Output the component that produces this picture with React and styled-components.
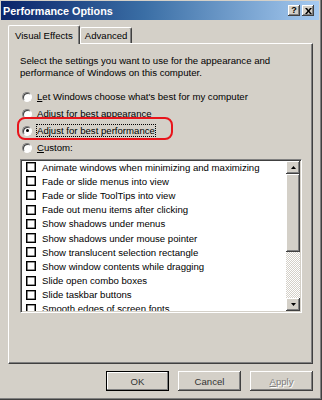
import React from "react";
import styled, { createGlobalStyle } from "styled-components";

const GlobalStyle = createGlobalStyle`
  html, body {
    margin: 0;
    padding: 0;
    background: #d4d0c8;
  }
  body {
    font-family: "Liberation Sans", Arial, sans-serif;
    font-size: 9.6px;
    color: #000;
  }
`;

const effects = [
  "Animate windows when minimizing and maximizing",
  "Fade or slide menus into view",
  "Fade or slide ToolTips into view",
  "Fade out menu items after clicking",
  "Show shadows under menus",
  "Show shadows under mouse pointer",
  "Show translucent selection rectangle",
  "Show window contents while dragging",
  "Slide open combo boxes",
  "Slide taskbar buttons",
  "Smooth edges of screen fonts"
];

export default function App() {
  return (
    <>
      <GlobalStyle />
      <Window>
        <TitleBar>
          <Title>Performance Options</Title>
          <TitleButtons>
            <CaptionButton>?</CaptionButton>
            <CaptionButton>
              <svg width="7" height="6" viewBox="0 0 7 6">
                <path d="M0 0h2l1.5 2 1.5-2h2L4.5 3 7 6H5L3.5 4 2 6H0l2.5-3z" fill="#000" />
              </svg>
            </CaptionButton>
          </TitleButtons>
        </TitleBar>

        <TabStrip>
          <Tab $active>Visual Effects</Tab>
          <Tab>Advanced</Tab>
        </TabStrip>

        <Panel>
          <Intro>
            Select the settings you want to use for the appearance and
            <br />
            performance of Windows on this computer.
          </Intro>

          <RadioGroup>
            <RadioRow>
              <Radio />
              <span>
                <u>L</u>et Windows choose what's best for my computer
              </span>
            </RadioRow>
            <RadioRow>
              <Radio />
              <span>Adjust for best appearance</span>
            </RadioRow>
            <RadioRow>
              <Radio $checked />
              <Focused>Adjust for best performance</Focused>
            </RadioRow>
            <RadioRow>
              <Radio />
              <span>
                <u>C</u>ustom:
              </span>
            </RadioRow>
            <Highlight />
          </RadioGroup>

          <ListBox>
            <Items>
              {effects.map((label) => (
                <Item key={label}>
                  <Check />
                  {label}
                </Item>
              ))}
            </Items>
            <ScrollBar>
              <Arrow>
                <svg width="5" height="3" viewBox="0 0 5 3">
                  <path d="M2.5 0L5 3H0z" fill="#000" />
                </svg>
              </Arrow>
              <Thumb />
              <Track />
              <Arrow>
                <svg width="5" height="3" viewBox="0 0 5 3">
                  <path d="M0 0h5L2.5 3z" fill="#000" />
                </svg>
              </Arrow>
            </ScrollBar>
          </ListBox>
        </Panel>

        <ButtonRow>
          <Button $default>OK</Button>
          <Button>Cancel</Button>
          <Button $disabled>
            <u>A</u>pply
          </Button>
        </ButtonRow>
      </Window>
    </>
  );
}

// Styled Components

const bevelOut = `
  box-shadow: inset -1px -1px #404040, inset 1px 1px #fff,
    inset -2px -2px #808080, inset 2px 2px #d4d0c8;
`;

const Window = styled.div`
  width: 322px;
  height: 400px;
  box-sizing: border-box;
  padding: 1px 3px 3px 1px;
  background: #d4d0c8;
  box-shadow: inset -1px -1px #404040, inset -2px -2px #808080;
  display: flex;
  flex-direction: column;
`;

const TitleBar = styled.div`
  height: 19px;
  display: flex;
  align-items: center;
  justify-content: space-between;
  padding: 0 5px 0 2px;
  background: linear-gradient(to right, #0a246a 0%, #3a6ea5 45%, #a6caf0 100%);
`;

const Title = styled.span`
  color: #fff;
  font-weight: bold;
  font-size: 10.8px;
`;

const TitleButtons = styled.div`
  display: flex;
  gap: 2px;
`;

const CaptionButton = styled.div`
  width: 12px;
  height: 11px;
  background: #d4d0c8;
  ${bevelOut}
  display: flex;
  align-items: center;
  justify-content: center;
  font-weight: bold;
  font-size: 9px;
  line-height: 1;
`;

const TabStrip = styled.div`
  display: flex;
  align-items: flex-end;
  height: 18px;
  margin-top: 5px;
  padding-left: 7px;
  position: relative;
  z-index: 1;
`;

const Tab = styled.div`
  box-sizing: border-box;
  height: ${(p) => (p.$active ? "19px" : "16px")};
  margin-bottom: ${(p) => (p.$active ? "-1px" : "0")};
  padding: ${(p) => (p.$active ? "0 6px" : "0 4px")};
  display: flex;
  align-items: center;
  background: #d4d0c8;
  border-top: 1px solid #fff;
  border-left: 1px solid #fff;
  border-right: 1px solid #404040;
  border-top-left-radius: 2px;
  border-top-right-radius: 2px;
  box-shadow: inset -1px 0 #808080;
`;

const Panel = styled.div`
  box-sizing: border-box;
  height: 321px;
  margin: 0 6px 0 7px;
  padding: 11px 10px 0 11px;
  border-top: 1px solid #fff;
  border-left: 1px solid #fff;
  border-right: 1px solid #404040;
  border-bottom: 1px solid #404040;
  box-shadow: inset -1px -1px #808080;
  display: flex;
  flex-direction: column;
`;

const Intro = styled.p`
  margin: 0;
  line-height: 12px;
`;

const RadioGroup = styled.div`
  position: relative;
  margin-top: 9px;
  display: flex;
  flex-direction: column;
`;

const RadioRow = styled.div`
  height: 17px;
  display: flex;
  align-items: center;
  gap: 5px;
  padding-left: 2px;
`;

const Radio = styled.span`
  box-sizing: border-box;
  width: 10px;
  height: 10px;
  border-radius: 50%;
  background: #fff;
  border: 1px solid;
  border-color: #808080 #fff #fff #808080;
  box-shadow: inset 1px 1px #404040;
  display: flex;
  align-items: center;
  justify-content: center;

  &::after {
    content: "";
    display: ${(p) => (p.$checked ? "block" : "none")};
    width: 3px;
    height: 3px;
    border-radius: 50%;
    background: #000;
  }
`;

const Focused = styled.span`
  outline: 1px dotted #000;
  outline-offset: 0;
`;

const Highlight = styled.div`
  position: absolute;
  left: -3px;
  top: 29px;
  width: 156px;
  height: 23px;
  box-sizing: border-box;
  border: 2.5px solid #e8141b;
  border-radius: 8px;
  pointer-events: none;
`;

const ListBox = styled.div`
  box-sizing: border-box;
  height: 154px;
  margin-top: 3px;
  background: #fff;
  display: flex;
  border: 1px solid;
  border-color: #808080 #fff #fff #808080;
  box-shadow: inset 1px 1px #404040, inset -1px -1px #d4d0c8;
  padding: 1px 1px 1px 1px;
  overflow: hidden;
`;

const Items = styled.div`
  flex: 1;
  overflow: hidden;
  padding-left: 4px;
  margin-top: -1px;
`;

const Item = styled.div`
  height: 14.2px;
  display: flex;
  align-items: center;
  gap: 6px;
  white-space: nowrap;
`;

const Check = styled.span`
  box-sizing: border-box;
  flex: none;
  width: 10px;
  height: 10px;
  border: 1px solid #000;
  box-shadow: inset 0 0 0 0.6px #333;
  background: #fff;
`;

const ScrollBar = styled.div`
  width: 14px;
  display: flex;
  flex-direction: column;
`;

const Arrow = styled.div`
  height: 13px;
  flex: none;
  background: #d4d0c8;
  ${bevelOut}
  display: flex;
  align-items: center;
  justify-content: center;
`;

const Thumb = styled.div`
  height: 78px;
  flex: none;
  background: #d4d0c8;
  ${bevelOut}
`;

const Track = styled.div`
  flex: 1;
  background-color: #fff;
  background-image: repeating-conic-gradient(#d4d0c8 0% 25%, #fff 0% 50%);
  background-size: 2px 2px;
`;

const ButtonRow = styled.div`
  display: flex;
  justify-content: flex-end;
  gap: 9px;
  margin: 7px 6px 0 0;
`;

const Button = styled.div`
  box-sizing: border-box;
  width: 63px;
  height: 20px;
  display: flex;
  align-items: center;
  justify-content: center;
  background: #d4d0c8;
  color: ${(p) => (p.$disabled ? "#808080" : "#333")};
  text-shadow: ${(p) => (p.$disabled ? "1px 1px #fff" : "none")};
  ${(p) =>
    p.$default
      ? `border: 1px solid #000;
         box-shadow: inset -1px -1px #808080, inset 1px 1px #fff;`
      : bevelOut}
`;
